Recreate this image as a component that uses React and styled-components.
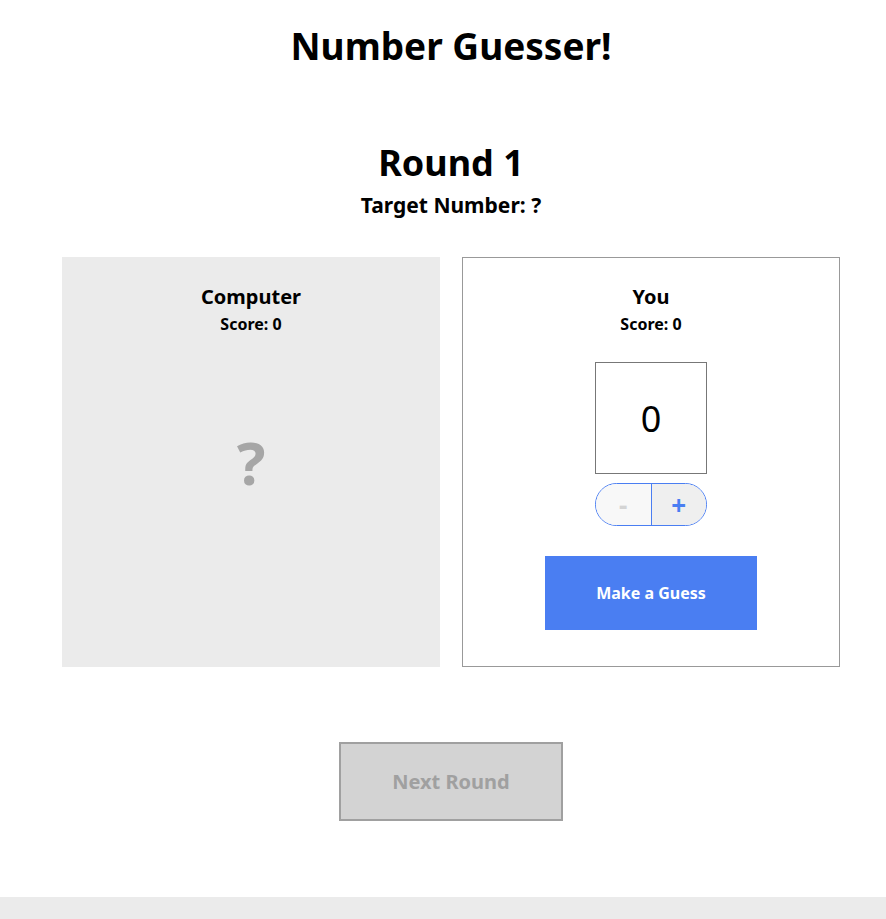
import styled, { createGlobalStyle } from 'styled-components';

const GlobalStyle = createGlobalStyle`
    html, body {
        margin: 0;
        padding: 0;
        background: #fff;
    }

    body {
        font-family: "Noto Sans", "Open Sans", sans-serif;
        color: #000;
    }
`;

const App = () => {
    return (<>
        <GlobalStyle />
        <Page>
            <Main>
                <Title>Number Guesser!</Title>
                <RoundTitle>Round 1</RoundTitle>
                <Target>Target Number: ?</Target>
                <Panels>
                    <Panel $filled>
                        <PlayerName>Computer</PlayerName>
                        <Score>Score: 0</Score>
                        <Mystery>?</Mystery>
                    </Panel>
                    <Panel>
                        <PlayerName>You</PlayerName>
                        <Score>Score: 0</Score>
                        <GuessBox>0</GuessBox>
                        <Stepper>
                            <StepButton disabled>-</StepButton>
                            <StepButton $active>+</StepButton>
                        </Stepper>
                        <GuessButton>Make a Guess</GuessButton>
                    </Panel>
                </Panels>
                <NextButton disabled>Next Round</NextButton>
            </Main>
            <Footer />
        </Page>
    </>);
};

const Page = styled.div`
    min-height: 100vh;
    display: flex;
    flex-direction: column;
`;

const Main = styled.main`
    display: flex;
    flex-direction: column;
    align-items: center;
    padding: 24px 0 0 16px;
`;

const Title = styled.h1`
    margin: 0;
    font-size: 37px;
    line-height: 44px;
    font-weight: 700;
`;

const RoundTitle = styled.h2`
    margin: 73px 0 0;
    font-size: 36px;
    line-height: 44px;
    font-weight: 700;
`;

const Target = styled.h3`
    margin: 8px 0 0;
    font-size: 21px;
    line-height: 24px;
    font-weight: 700;
`;

const Panels = styled.div`
    display: flex;
    gap: 22px;
    margin-top: 40px;
`;

const Panel = styled.section`
    box-sizing: border-box;
    width: 378px;
    height: 410px;
    display: flex;
    flex-direction: column;
    align-items: center;
    padding-top: 27px;
    background: ${p => p.$filled ? '#ebebeb' : '#fff'};
    border: 1px solid ${p => p.$filled ? '#ebebeb' : '#999'};
`;

const PlayerName = styled.h4`
    margin: 0;
    font-size: 20px;
    line-height: 24px;
    font-weight: 700;
`;

const Score = styled.p`
    margin: 5px 0 0;
    font-size: 16px;
    line-height: 20px;
    font-weight: 700;
`;

const Mystery = styled.div`
    margin-top: 88px;
    font-size: 60px;
    line-height: 80px;
    font-weight: 700;
    color: #a6a6a6;
`;

const GuessBox = styled.div`
    box-sizing: border-box;
    width: 112px;
    height: 112px;
    margin-top: 28px;
    display: flex;
    align-items: center;
    justify-content: center;
    border: 1px solid #777;
    font-size: 36px;
    font-weight: 400;
`;

const Stepper = styled.div`
    box-sizing: border-box;
    width: 112px;
    height: 43px;
    margin-top: 9px;
    display: flex;
    border: 1px solid #4a7ef2;
    border-radius: 22px;
    overflow: hidden;
`;

const StepButton = styled.button`
    flex: 1;
    border: none;
    padding: 0;
    font-family: inherit;
    font-size: 26px;
    font-weight: 700;
    line-height: 1;
    background: ${p => p.$active ? '#efefef' : '#f8f8f8'};
    color: ${p => p.$active ? '#4a7ef2' : '#d4d4d4'};
    border-left: ${p => p.$active ? '1px solid #4a7ef2' : 'none'};
`;

const GuessButton = styled.button`
    width: 212px;
    height: 74px;
    margin-top: 30px;
    border: none;
    background: #4a7ef2;
    color: #fff;
    font-family: inherit;
    font-size: 16px;
    font-weight: 700;
`;

const NextButton = styled.button`
    box-sizing: border-box;
    width: 224px;
    height: 79px;
    margin-top: 75px;
    background: #d3d3d3;
    border: 2px solid #a0a0a0;
    color: #a0a0a0;
    font-family: inherit;
    font-size: 20px;
    font-weight: 700;
`;

const Footer = styled.footer`
    margin-top: auto;
    height: 22px;
    background: #ebebeb;
`;

export default App
